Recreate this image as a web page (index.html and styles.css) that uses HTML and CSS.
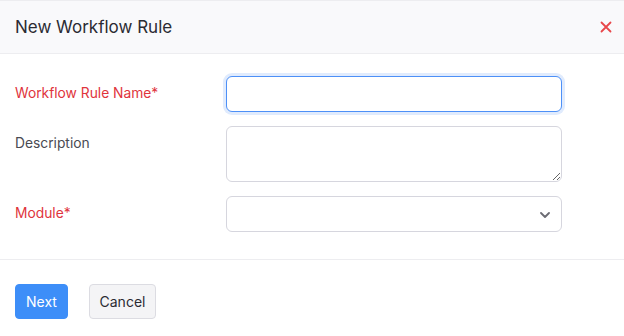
FILE: index.html
```html
<!DOCTYPE html>
<html>
<head>
<meta charset="utf-8">
<link rel="stylesheet" href="styles.css">
</head>
<body>
<div class="modal">
  <div class="header">
    <span class="title">New Workflow Rule</span>
    <svg class="close" width="12" height="12" viewBox="0 0 12 12"><path d="M1.5 1.5L10.5 10.5M10.5 1.5L1.5 10.5" stroke="#e8474a" stroke-width="1.8" stroke-linecap="round"/></svg>
  </div>
  <div class="body">
    <div class="row">
      <label class="label req">Workflow Rule Name*</label>
      <input class="field focus" type="text">
    </div>
    <div class="row">
      <label class="label">Description</label>
      <textarea class="field area"></textarea>
    </div>
    <div class="row">
      <label class="label req">Module*</label>
      <div class="field select">
        <svg width="10" height="6" viewBox="0 0 10 6"><path d="M1 1L5 5L9 1" fill="none" stroke="#6b6b73" stroke-width="1.8" stroke-linecap="round" stroke-linejoin="round"/></svg>
      </div>
    </div>
  </div>
  <div class="footer">
    <button class="btn primary">Next</button>
    <button class="btn secondary">Cancel</button>
  </div>
</div>
</body>
</html>
```
FILE: styles.css
```css
* { box-sizing: border-box; }
html, body { margin: 0; padding: 0; background: #fff; }
body { font-family: Inter, "Noto Sans", sans-serif; width: 624px; height: 336px; overflow: hidden; }
.header {
  height: 54px;
  border-top: 1px solid #ededf0;
  border-bottom: 1px solid #ededf0;
  background: #f9f9fb;
  display: flex;
  align-items: center;
  justify-content: space-between;
  padding: 0 12px 0 15px;
}
.title { font-size: 17px; color: #2b2b33; }
.close { display: block; }
.body {
  padding: 22px 0 27px 15px;
  display: flex;
  flex-direction: column;
  gap: 14px;
  border-bottom: 1px solid #ededf0;
}
.row { display: grid; grid-template-columns: 211px 336px; align-items: start; }
.label { font-size: 13.8px; line-height: 20px; padding-top: 7px; color: #4a4a52; }
.label.req { color: #e0343c; }
.field {
  display: block;
  width: 336px;
  height: 36px;
  border: 1px solid #d6d6de;
  border-radius: 6px;
  background: #fff;
  margin: 0;
  font: inherit;
  outline: none;
}
.field.focus { border-color: #4d90f7; box-shadow: 0 0 0 3px #e0ebfd; }
.field.area { height: 56px; resize: vertical; }
.field.select { display: flex; align-items: center; justify-content: flex-end; padding-right: 11px; }
.field.select svg { display: block; margin-top: 1px; }
.footer { padding: 24px 15px; display: flex; gap: 21px; }
.btn {
  height: 35px;
  font-family: inherit;
  font-size: 14px;
  border-radius: 4px;
  margin: 0;
}
.btn.primary { background: #3d8ef8; color: #fff; border: 1px solid #3d8ef8; width: 53px; padding: 0; }
.btn.secondary { background: #f4f4f6; color: #2b2b33; border: 1px solid #dcdce2; width: 67px; padding: 0; }
```
